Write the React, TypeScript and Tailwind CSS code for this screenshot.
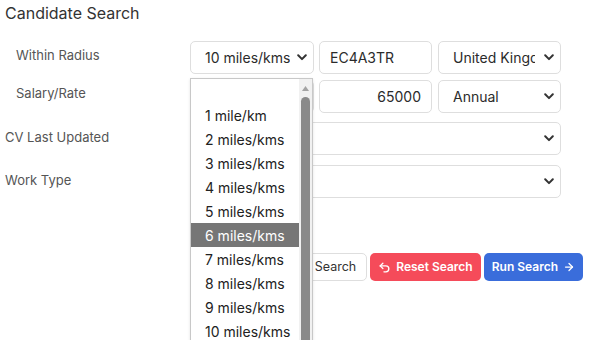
import { Undo2, ArrowRight } from "lucide-react";

const radiusOptions = [
  "",
  "1 mile/km",
  "2 miles/kms",
  "3 miles/kms",
  "4 miles/kms",
  "5 miles/kms",
  "6 miles/kms",
  "7 miles/kms",
  "8 miles/kms",
  "9 miles/kms",
  "10 miles/kms",
  "15 miles/kms",
];

function Chevron() {
  return (
    <svg width="10" height="7" viewBox="0 0 10 7" className="shrink-0">
      <path d="M1.2 1.3 5 5.1 8.8 1.3" fill="none" stroke="#333" strokeWidth="2" strokeLinecap="round" strokeLinejoin="round" />
    </svg>
  );
}

function FakeSelect({ value, className, textWidth }: { value: string; className: string; textWidth?: string }) {
  return (
    <div className={`h-[33px] border border-[#dedede] rounded-[5px] bg-white flex items-center justify-between pl-[14px] pr-[6px] ${className}`}>
      <span className={`overflow-hidden whitespace-nowrap text-[14px] text-[#2b2b2b] ${textWidth ?? ""}`}>{value}</span>
      <Chevron />
    </div>
  );
}

export default function App() {
  return (
    <div className="relative w-[599px] h-[340px] overflow-hidden bg-white font-['Inter',sans-serif]">
      <h1 className="pl-[5px] pt-[3px] text-[16px] text-[#333] leading-[20px]">Candidate Search</h1>

      <div className="mt-[18px] flex flex-col">
        {/* Within radius */}
        <div className="flex items-center h-[33px]">
          <label className="w-[190px] pl-[16px] pb-[4px] text-[13px] text-[#555]">Within Radius</label>
          <FakeSelect value="10 miles/kms" className="w-[124px]" />
          <input
            readOnly
            value="EC4A3TR"
            className="ml-[5px] w-[113px] h-[33px] border border-[#dedede] rounded-[5px] px-[10px] text-[14px] text-[#2b2b2b] outline-none"
          />
          <FakeSelect value="United Kingdom" className="ml-[6px] w-[123px]" textWidth="w-[82px]" />
        </div>

        {/* Salary */}
        <div className="flex items-center h-[33px] mt-[6px]">
          <label className="w-[190px] pl-[16px] pb-[6px] text-[13px] text-[#555]">Salary/Rate</label>
          <FakeSelect value="GBP" className="w-[124px]" />
          <input
            readOnly
            value="65000"
            className="ml-[5px] w-[113px] h-[33px] border border-[#dedede] rounded-[5px] px-[10px] text-right text-[14px] text-[#2b2b2b] outline-none"
          />
          <FakeSelect value="Annual" className="ml-[6px] w-[123px]" />
        </div>

        {/* CV last updated */}
        <div className="flex items-center h-[33px] mt-[9px]">
          <label className="w-[190px] pl-[5px] pb-[2px] text-[13px] text-[#555]">CV Last Updated</label>
          <FakeSelect value="" className="w-[371px]" />
        </div>

        {/* Work type */}
        <div className="flex items-center h-[33px] mt-[10px]">
          <label className="w-[190px] pl-[5px] pb-[2px] text-[13px] text-[#555]">Work Type</label>
          <FakeSelect value="" className="w-[371px]" />
        </div>

        {/* Actions */}
        <div className="flex items-center justify-end gap-[3px] pr-[16px] mt-[55px]">
          <button className="h-[28px] px-[10px] border border-[#dedede] rounded-[5px] text-[12.5px] text-[#333] bg-white">
            Cancel Search
          </button>
          <button className="h-[28px] px-[8px] rounded-[5px] bg-[#f54b5a] text-white text-[12px] font-semibold flex items-center gap-[5px]">
            <Undo2 className="w-[13px] h-[13px]" strokeWidth={2.5} />
            Reset Search
          </button>
          <button className="h-[28px] px-[8px] rounded-[5px] bg-[#3a6ddb] text-white text-[12px] font-semibold flex items-center gap-[5px]">
            Run Search
            <ArrowRight className="w-[12px] h-[12px]" strokeWidth={2.5} />
          </button>
        </div>
      </div>

      {/* Open native dropdown list */}
      <div className="absolute left-[190px] top-[78px] w-[123px] h-[280px] border border-[#c8c8c8] bg-white flex shadow-sm">
        <ul className="flex-1 pt-0">
          {radiusOptions.map((opt) => (
            <li
              key={opt || "blank"}
              className={`h-[24px] pl-[14px] flex items-center text-[14px] whitespace-nowrap ${
                opt === "6 miles/kms" ? "bg-[#767676] text-white" : "text-[#222]"
              }`}
            >
              {opt}
            </li>
          ))}
        </ul>
        <div className="w-[13px] bg-[#f1f1f1] flex flex-col items-center pt-[7px]">
          <svg width="7" height="5" viewBox="0 0 7 5">
            <path d="M3.5 0 7 5H0z" fill="#a3a3a3" />
          </svg>
          <div className="mt-[6px] w-[9px] flex-1 bg-[#8a8a8a] rounded-t-full" />
        </div>
      </div>
    </div>
  );
}
